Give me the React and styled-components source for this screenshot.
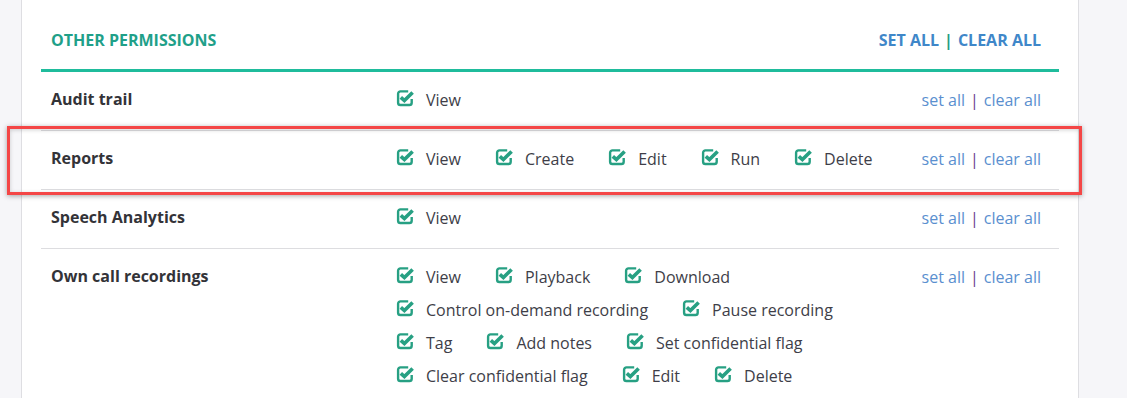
import styled, { createGlobalStyle } from "styled-components";

const GlobalStyle = createGlobalStyle`
  html, body {
    margin: 0;
    padding: 0;
    background: #f6f6f9;
    font-family: "Open Sans", "Noto Sans", sans-serif;
  }
`;

const Page = styled.div`
  height: 398px;
  overflow: hidden;
  padding-left: 21px;
`;

const Panel = styled.div`
  width: 1018px;
  min-height: 398px;
  padding: 0 19px;
  background: #fff;
  border-left: 1px solid #dedee2;
  border-right: 1px solid #dedee2;
`;

const Header = styled.div`
  display: flex;
  align-items: flex-start;
  justify-content: space-between;
  height: 72px;
  box-sizing: border-box;
  padding: 29px 18px 0 10px;
  border-bottom: 3px solid #1fbc9c;
`;

const Title = styled.h2`
  margin: 0;
  font-size: 16px;
  line-height: 22px;
  font-weight: 700;
  color: #1fa089;
`;

const HeaderLinks = styled.div`
  font-size: 16px;
  line-height: 22px;
  font-weight: 700;
  color: #3f87c9;
`;

const HeaderPipe = styled.span`
  color: #2a9d84;
  margin: 0 5px;
`;

const Row = styled.div`
  position: relative;
  display: grid;
  grid-template-columns: 345px 1fr 140px;
  align-items: start;
  padding: 11px 18px 14px 10px;
  border-bottom: ${(p) => (p.$last ? "none" : "1px solid #dddde0")};
`;

const Label = styled.div`
  font-size: 16px;
  font-weight: 700;
  color: #333338;
  line-height: 33px;
`;

const Options = styled.div`
  display: flex;
  flex-wrap: wrap;
  column-gap: 34px;
`;

const Option = styled.label`
  display: flex;
  align-items: center;
  gap: 12px;
  height: 33px;
  font-size: 16px;
  color: #3e3e48;
  white-space: nowrap;
`;

const Actions = styled.div`
  text-align: right;
  font-size: 16px;
  line-height: 31px;
  padding-top: 2px;
  color: #5a8fcf;
`;

const Pipe = styled.span`
  color: #6a3c8e;
  margin: 0 5px;
`;

const Highlight = styled.div`
  position: absolute;
  left: -34px;
  top: -5px;
  width: 1075px;
  height: 69px;
  box-sizing: border-box;
  border: 3px solid #f44646;
  box-shadow: 0 1px 5px rgba(0, 0, 0, 0.35), inset 0 1px 4px rgba(0, 0, 0, 0.18);
  pointer-events: none;
`;

const CheckIcon = () => (
  <svg width="18" height="18" viewBox="0 0 18 18" style={{ marginTop: -3 }}>
    <path
      d="M12.2 2.4 H4.4 a2.3 2.3 0 0 0 -2.3 2.3 V13.7 a2.3 2.3 0 0 0 2.3 2.3 H13.4 a2.3 2.3 0 0 0 2.3 -2.3 V10"
      fill="none"
      stroke="#27a083"
      strokeWidth="2.4"
    />
    <path
      d="M4.8 8.3 L8.4 11.6 L16.6 3.4"
      fill="none"
      stroke="#27a083"
      strokeWidth="3.6"
    />
  </svg>
);

const permissions = [
  { name: "Audit trail", options: ["View"] },
  { name: "Reports", options: ["View", "Create", "Edit", "Run", "Delete"], highlight: true },
  { name: "Speech Analytics", options: ["View"] },
  {
    name: "Own call recordings",
    options: [
      "View",
      "Playback",
      "Download",
      "Control on-demand recording",
      "Pause recording",
      "Tag",
      "Add notes",
      "Set confidential flag",
      "Clear confidential flag",
      "Edit",
      "Delete",
    ],
  },
];

export default function App() {
  return (
    <Page>
      <GlobalStyle />
      <Panel>
        <Header>
          <Title>OTHER PERMISSIONS</Title>
          <HeaderLinks>
            SET ALL<HeaderPipe>|</HeaderPipe>CLEAR ALL
          </HeaderLinks>
        </Header>
        {permissions.map((perm, i) => (
          <Row key={perm.name} $last={i === permissions.length - 1}>
            <Label>{perm.name}</Label>
            <Options>
              {perm.options.map((opt) => (
                <Option key={opt}>
                  <CheckIcon />
                  {opt}
                </Option>
              ))}
            </Options>
            <Actions>
              set all<Pipe>|</Pipe>clear all
            </Actions>
            {perm.highlight && <Highlight />}
          </Row>
        ))}
      </Panel>
    </Page>
  );
}
